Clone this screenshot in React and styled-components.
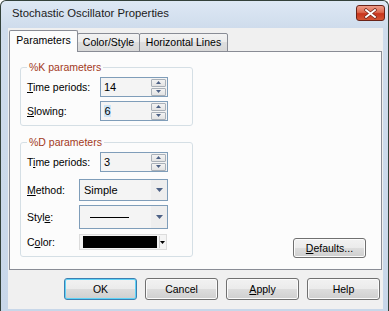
import React from "react";
import styled, { createGlobalStyle } from "styled-components";

const GlobalStyle = createGlobalStyle`
  html, body { margin: 0; padding: 0; background: #ffffff; }
  body { font-family: "Liberation Sans", Arial, sans-serif; }
  * { box-sizing: border-box; }
`;

const Window = styled.div`
  width: 389px;
  height: 311px;
  border: 1px solid #33413a;
  border-bottom: none;
  border-radius: 6px 6px 0 0;
  background: linear-gradient(180deg, #dde8f4 0px, #cfdcec 27px, #c8d7e9 100%);
  display: flex;
  flex-direction: column;
  overflow: hidden;
  font-size: 10.5px;
  color: #000;
`;

const TitleBar = styled.div`
  height: 27px;
  flex: none;
  display: flex;
  align-items: flex-start;
  justify-content: space-between;
  padding: 0 3px 0 11px;
`;

const Title = styled.div`
  font-size: 11.3px;
  line-height: 13px;
  margin-top: 6px;
  color: #1b1b1b;
`;

const CloseButton = styled.button`
  all: unset;
  box-sizing: border-box;
  width: 29px;
  height: 16px;
  margin-top: 4px;
  border: 1px solid #6a2318;
  border-radius: 3px;
  background: linear-gradient(180deg, #ee9c88 0%, #dd6a50 45%, #c8341c 55%, #d35534 100%);
  display: flex;
  align-items: center;
  justify-content: center;
`;

const Client = styled.div`
  flex: 1;
  margin: 0 5px 2px 7px;
  background: #f0f0f0;
  padding: 3px 0 0 1px;
  display: flex;
  flex-direction: column;
`;

const TabRow = styled.div`
  display: flex;
  align-items: flex-end;
  height: 21px;
  position: relative;
  z-index: 2;
  margin-bottom: -1px;
`;

const Tab = styled.div`
  width: ${(p) => p.$w}px;
  height: ${(p) => (p.$active ? 22 : 19)}px;
  margin-left: ${(p) => (p.$first ? 0 : -1)}px;
  border: 1px solid #898c95;
  border-bottom: ${(p) => (p.$active ? "none" : "1px solid #898c95")};
  border-radius: 2px 2px 0 0;
  background: ${(p) =>
    p.$active ? "#fcfcfc" : "linear-gradient(180deg, #f3f3f3 0%, #ebebeb 50%, #dedede 50%, #d8d8d8 100%)"};
  display: flex;
  align-items: ${(p) => (p.$active ? "flex-start" : "center")};
  padding-top: ${(p) => (p.$active ? 3 : 0)}px;
  justify-content: center;
  line-height: 13px;
  position: relative;
  z-index: ${(p) => (p.$active ? 3 : 1)};
`;

const Panel = styled.div`
  width: 373px;
  height: 219px;
  border: 1px solid #898c95;
  background: #fcfcfc;
  display: flex;
  justify-content: space-between;
  padding: 9px 15px 11px 10px;
`;

const Groups = styled.div`
  display: flex;
  flex-direction: column;
  gap: 10px;
`;

const Group = styled.fieldset`
  margin: 0;
  width: 173px;
  min-width: 0;
  border: 1px solid #d5dfe5;
  border-radius: 3px;
  padding: 3px 6px ${(p) => p.$pb}px 6px;
  display: flex;
  flex-direction: column;
`;

const Legend = styled.legend`
  padding: 0 2px;
  color: #a33a1c;
  line-height: 13px;
  font-size: 10.5px;
`;

const Row = styled.div`
  display: grid;
  grid-template-columns: ${(p) => p.$lw}px auto;
  align-items: center;
  margin-top: ${(p) => p.$mt || 0}px;
`;

const Label = styled.span`
  line-height: 13px;
  white-space: nowrap;
`;

const U = styled.span`
  text-decoration: underline;
`;

const SpinBox = styled.div`
  width: 68px;
  height: 20px;
  border: 1px solid #7f9db9;
  background: #f4f4f4;
  display: flex;
  align-items: center;
  padding: 0 1px 0 3px;
`;

const Value = styled.span`
  flex: 1;
  line-height: 13px;
  font-size: 11px;
`;

const Selected = styled.span`
  background: #cde6f7;
  padding: 0 0.5px;
`;

const SpinCol = styled.div`
  width: 15px;
  display: flex;
  flex-direction: column;
  gap: 1px;
`;

const SpinBtn = styled.div`
  height: 8px;
  border: 1px solid #a9b0b8;
  border-radius: 1px;
  background: linear-gradient(180deg, #f3f3f3 0%, #e3e3e3 100%);
  display: flex;
  align-items: center;
  justify-content: center;
`;

const Combo = styled.div`
  width: 89px;
  height: ${(p) => p.$h}px;
  border: 1px solid #7f9db9;
  background: #f4f4f4;
  display: flex;
  align-items: center;
  padding-left: 4px;
`;

const ComboText = styled.span`
  flex: 1;
  line-height: 13px;
  font-size: 11px;
`;

const LineSample = styled.div`
  flex: 1;
  height: 1px;
  background: #000;
  margin: 0 22px 0 6px;
`;

const ComboArrow = styled.div`
  width: 16px;
  align-self: stretch;
  display: flex;
  align-items: center;
  justify-content: center;
  background: #eeeeee;
`;

const ColorPicker = styled.div`
  width: 88px;
  height: 16px;
  border: 1px solid #dcdcdc;
  background: #f4f4f4;
  display: flex;
  align-items: center;
  padding: 1px 1px 1px 3px;
`;

const Swatch = styled.div`
  width: 75px;
  height: 12px;
  background: ${(p) => p.$color};
`;

const PickerArrow = styled.div`
  flex: 1;
  align-self: stretch;
  margin-left: 2px;
  border-left: 1px solid #c8c8c8;
  display: flex;
  align-items: center;
  justify-content: center;
`;

const PanelSide = styled.div`
  display: flex;
  flex-direction: column;
  justify-content: flex-end;
`;

const Button = styled.div`
  width: 73px;
  height: ${(p) => p.$h || 22}px;
  border: 1px solid ${(p) => (p.$default ? "#3c7fb1" : "#707070")};
  border-radius: 3px;
  background: linear-gradient(180deg, #f2f2f2 0%, #ebebeb 50%, #dddddd 50%, #cfcfcf 100%);
  box-shadow: inset 0 0 0 1px ${(p) => (p.$default ? "#5fd3f7" : "#fbfbfb")};
  display: flex;
  align-items: center;
  justify-content: center;
  line-height: 13px;
`;

const ButtonRow = styled.div`
  display: flex;
  justify-content: flex-end;
  gap: 8px;
  margin-top: 8px;
  padding-right: 3px;
`;

const Tri = ({ up, color = "#4d6185", w = 5, h = 3 }) => (
  <svg width={w} height={h} viewBox={`0 0 ${w} ${h}`} style={{ display: "block" }}>
    {up ? (
      <polygon points={`0,${h} ${w},${h} ${w / 2},0`} fill={color} />
    ) : (
      <polygon points={`0,0 ${w},0 ${w / 2},${h}`} fill={color} />
    )}
  </svg>
);

const Spin = ({ value, selected }) => (
  <SpinBox>
    <Value>{selected ? <Selected>{value}</Selected> : value}</Value>
    <SpinCol>
      <SpinBtn>
        <Tri up />
      </SpinBtn>
      <SpinBtn>
        <Tri />
      </SpinBtn>
    </SpinCol>
  </SpinBox>
);

const CloseIcon = () => (
  <svg width="13" height="11" viewBox="0 0 13 11">
    <path
      d="M2 2 L11 9 M11 2 L2 9"
      stroke="#7a2a1c"
      strokeWidth="3.4"
      strokeLinecap="square"
    />
    <path
      d="M2 2 L11 9 M11 2 L2 9"
      stroke="#ffffff"
      strokeWidth="1.8"
      strokeLinecap="square"
    />
  </svg>
);

export default function App() {
  return (
    <>
      <GlobalStyle />
      <Window>
        <TitleBar>
          <Title>Stochastic Oscillator Properties</Title>
          <CloseButton aria-label="Close">
            <CloseIcon />
          </CloseButton>
        </TitleBar>
        <Client>
          <TabRow>
            <Tab $w={69} $active $first>
              Parameters
            </Tab>
            <Tab $w={63}>Color/Style</Tab>
            <Tab $w={89}>Horizontal Lines</Tab>
          </TabRow>
          <Panel>
            <Groups>
              <Group $pb={4}>
                <Legend>%K parameters</Legend>
                <Row $lw={73}>
                  <Label>
                    <U>T</U>ime periods:
                  </Label>
                  <Spin value="14" />
                </Row>
                <Row $lw={73} $mt={4}>
                  <Label>
                    <U>S</U>lowing:
                  </Label>
                  <Spin value="6" selected />
                </Row>
              </Group>
              <Group $pb={6}>
                <Legend>%D parameters</Legend>
                <Row $lw={73}>
                  <Label>
                    T<U>i</U>me periods:
                  </Label>
                  <Spin value="3" />
                </Row>
                <Row $lw={52} $mt={7}>
                  <Label>
                    <U>M</U>ethod:
                  </Label>
                  <Combo $h={22}>
                    <ComboText>Simple</ComboText>
                    <ComboArrow>
                      <Tri w={7} h={4} />
                    </ComboArrow>
                  </Combo>
                </Row>
                <Row $lw={52} $mt={4}>
                  <Label>
                    Styl<U>e</U>:
                  </Label>
                  <Combo $h={24}>
                    <LineSample />
                    <ComboArrow>
                      <Tri w={7} h={4} />
                    </ComboArrow>
                  </Combo>
                </Row>
                <Row $lw={52} $mt={5}>
                  <Label>
                    C<U>o</U>lor:
                  </Label>
                  <ColorPicker>
                    <Swatch $color="#000000" />
                    <PickerArrow>
                      <Tri w={5} h={3} color="#000" />
                    </PickerArrow>
                  </ColorPicker>
                </Row>
              </Group>
            </Groups>
            <PanelSide>
              <Button $h={20}>
                <span>
                  <U>D</U>efaults...
                </span>
              </Button>
            </PanelSide>
          </Panel>
          <ButtonRow>
            <Button $default>OK</Button>
            <Button>Cancel</Button>
            <Button>
              <span>
                <U>A</U>pply
              </span>
            </Button>
            <Button>Help</Button>
          </ButtonRow>
        </Client>
      </Window>
    </>
  );
}
